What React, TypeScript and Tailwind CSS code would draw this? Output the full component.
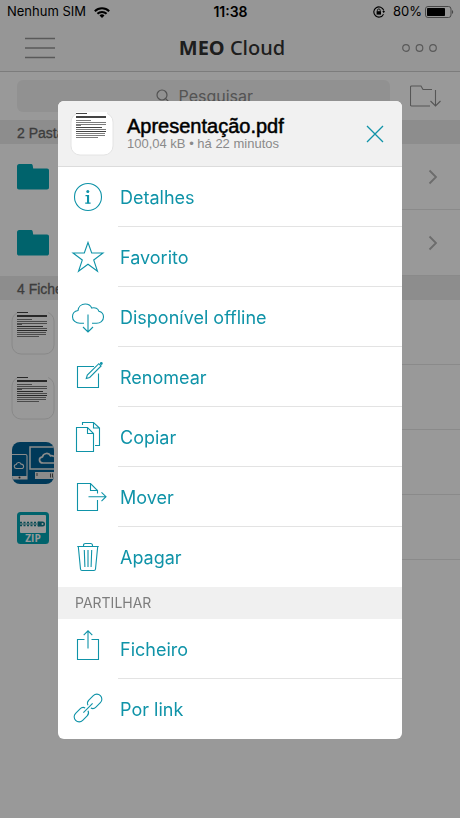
import React from 'react';

interface Action {
  label: string;
  icon: React.ReactNode;
}

const Icon = ({ children }: { children: React.ReactNode }) => (
  <svg
    className="h-8 w-8 overflow-visible"
    viewBox="0 0 32 32"
    fill="none"
    stroke="currentColor"
    strokeWidth={1.1}
    aria-hidden="true"
  >
    {children}
  </svg>
);

const actions: Action[] = [
  {
    label: 'Detalhes',
    icon: (
      <Icon>
        <circle cx="16" cy="16" r="13.5" />
        <circle cx="15.8" cy="10.6" r="1.5" fill="currentColor" stroke="none" />
        <path d="M13.5 14.6h3v7.6M13.2 22.2h5.4" strokeWidth={1.2} />
        <path d="M16 14.6v7.6" strokeWidth={2} />
      </Icon>
    ),
  },
  {
    label: 'Favorito',
    icon: (
      <Icon>
        <path d="M16 1.5 19.7 12H31L21.7 19 25.5 30.2 16 23.3 6.5 30.2 10.3 19 1 12h11.3z" />
      </Icon>
    ),
  },
  {
    label: 'Disponível offline',
    icon: (
      <Icon>
        <path d="M12 22.3H8C3.8 22.3 .5 19.5 .5 15.7 .5 12.5 2.8 10 6 9.500 6.4 5.7 9.3 3 13.2 3c3 0 5.5 1.5 6.5 4 3.5-1 6.500 .5 7.2 3.3 2.8 .7 4.6 3 4.6 5.700 0 4-3.3 6.3-7 6.3H20" />
        <path d="M16 13.5V31M11 26l5 5 5-5" />
      </Icon>
    ),
  },
  {
    label: 'Renomear',
    icon: (
      <Icon>
        <path d="M22 5.5H5.500v21h21V12.5" />
        <path d="M14.3 17.500l1-3.400L26.800 2.700l2.300 2.300L17.700 16.400z" />
        <circle cx="29.300" cy="2.500" r="1.400" fill="currentColor" stroke="none" />
      </Icon>
    ),
  },
  {
    label: 'Copiar',
    icon: (
      <Icon>
        <path d="M15.5 6.5h-11v24h17v-18zv6h6" />
        <path d="M10.5 4V1.500h11l6 5.500v17.500H23M21.500 1.500V7h6" />
      </Icon>
    ),
  },
  {
    label: 'Mover',
    icon: (
      <Icon>
        <path d="M25.5 12.500v-3l-7-7h-13v27h20V19M18.500 2.500v7h7" />
        <path d="M16.5 15.700H34M29.500 11.300l4.500 4.400-4.500 4.400" />
      </Icon>
    ),
  },
  {
    label: 'Apagar',
    icon: (
      <Icon>
        <path d="M5.3 5.500h21.400M11.500 5.500v-1c0-1.300.7-2 2-2h5c1.300 0 2 .7 2 2v1" />
        <path d="M6.3 5.500 8.500 28c.1.900.6 1.500 1.500 1.500h12c.9 0 1.400-.6 1.500-1.500L25.700 5.500" />
        <path d="M12.3 9l.6 17M16 9v17M19.700 9l-.6 17" />
      </Icon>
    ),
  },
];

const shareActions: Action[] = [
  {
    label: 'Ficheiro',
    icon: (
      <Icon>
        <path d="M12.5 6.500h-7v20h21v-20h-7" />
        <path d="M16 15.500V-2M11.700 2.200 16-2.100l4.300 4.300" />
      </Icon>
    ),
  },
  {
    label: 'Por link',
    icon: (
      <Icon>
        <g transform="translate(16 15) rotate(-45)">
          <path d="M-2 2C-2.600 4-4.200 5-6.200 5h-6.300a5 5 0 0 1 0-10h6.300c2 0 3.600 1 4.200 3" />
          <path d="M2-2C2.600-4 4.200-5 6.200-5h6.300a5 5 0 0 1 0 10H6.200C4.200 5 2.600 4 2 2" />
          <path d="M-6.500 0h13" />
        </g>
      </Icon>
    ),
  },
];

const DocumentThumb = () => (
  <svg className="h-[44px] w-[44px] overflow-visible" viewBox="0 0 44 44" aria-hidden="true">
    <rect x="1" y="1" width="42" height="42" rx="9" fill="#fff" stroke="#e4e4e4" strokeWidth="1" />
    <rect x="6" y="0" width="31" height="26" fill="#fff" />
    <g stroke="#444" fill="none">
      <path d="M6 1.500h11" strokeWidth="1" />
      <path d="M6 4.500h30M6 5.500h30M6 15.500h26M6 19.500h30" strokeWidth="1.100" />
      <path d="M6 8.500h15M6 10.500h30M6 12.500h30M6 13.500h5M6 17.500h30M6 21.500h29M6 23.500h29M6 25.500h22" strokeWidth=".7" />
    </g>
  </svg>
);

const FolderIcon = () => (
  <svg className="h-[26px] w-8" viewBox="0 0 32 26" fill="#00a5b5" aria-hidden="true">
    <path d="M0 2.500C0 1 .8 0 2.200 0H14c1 0 1.500.5 1.700 1.500L16.200 4.500H30c1.300 0 2 .8 2 2v17c0 1.300-.7 2-2 2H2c-1.300 0-2-.7-2-2z" />
  </svg>
);

const DevicesThumb = () => (
  <svg className="h-[42px] w-[42px]" viewBox="0 0 42 42" fill="none" stroke="#e8e8e8" aria-hidden="true">
    <clipPath id="devices">
      <rect width="42" height="42" rx="8" />
    </clipPath>
    <g clipPath="url(#devices)">
      <rect width="42" height="42" fill="#006094" stroke="none" />
      <path d="M0 12.500h13.500c1 0 1.500.5 1.500 1.500V37H0" strokeWidth="1.100" />
      <path d="M0 34h15v3H0z" fill="#e8e8e8" stroke="none" />
      <circle cx="7.500" cy="35.500" r="1" fill="#333" stroke="none" />
      <path d="M42 5H18v22h24" strokeWidth="1.500" />
      <path d="M4.500 26.500c-2.800 0-3-3.700-.3-4 .6-2.500 4-2.700 4.800-.4 3.200-.2 3.500 4.400.5 4.400z" strokeWidth="1.100" />
      <path d="M42 21H31c-4.500 0-4.700-5.700-.5-6.200 1-4 6.300-4.500 8-1 1.300-.3 2.500 0 3.500.8" strokeWidth="1.700" />
      <path d="M23 30h19v7H23z" fill="#e8e8e8" stroke="none" />
      <path d="M25 31v3M38.500 31.500v4M40.500 31.500v4" stroke="#555" />
    </g>
  </svg>
);

const ZipThumb = () => (
  <svg className="h-[32px] w-8" viewBox="0 0 32 32" aria-hidden="true">
    <rect width="32" height="32" rx="3.500" fill="#00a5b5" />
    <rect x="3" y="3" width="26" height="18" rx="1" fill="#fff" />
    <path d="M3 10.500h20M3 13.500h20" stroke="#0a7c8c" strokeWidth="1.500" strokeDasharray="2 1.500" />
    <path d="M3 12h21" stroke="#0a7c8c" strokeWidth=".8" />
    <path d="M21 9.500h4.500a2.500 2.500 0 0 1 0 5H21z" fill="#0a7c8c" />
    <circle cx="25.500" cy="12" r="1" fill="#fff" />
    <text x="16" y="30" textAnchor="middle" fontFamily="Open Sans, sans-serif" fontWeight="700" fontSize="10" fill="#fff">
      ZIP
    </text>
  </svg>
);

const StatusBar = () => (
  <div className="grid h-6 grid-cols-[1fr_auto_1fr] items-center pr-1.5 pl-[7px] text-[13px] text-black">
    <div className="flex items-center gap-2">
      <span>Nenhum SIM</span>
      <svg className="h-[11px] w-4" viewBox="0 0 16 11" fill="none" stroke="#000" strokeWidth="2" aria-hidden="true">
        <path d="M.8 4.200a10.200 10.200 0 0 1 14.400 0M3.400 6.800a6.500 6.500 0 0 1 9.200 0" />
        <path d="M8 11 5.500 8.600a3.500 3.500 0 0 1 5 0z" fill="#000" stroke="none" />
      </svg>
    </div>
    <span className="text-sm font-semibold">11:38</span>
    <div className="flex items-center justify-end">
      <svg className="mr-2 h-3 w-3" viewBox="0 0 12 12" fill="none" stroke="#000" aria-hidden="true">
        <path d="M10.800 4.500A5.100 5.100 0 1 0 10.500 8.200" strokeWidth="1.100" />
        <path d="M9.300 5h2.700l-1.200 2.200z" fill="#000" stroke="none" />
        <rect x="3.600" y="5.200" width="4.400" height="3.400" fill="#000" stroke="none" />
        <path d="M4.400 5.500V4.300a1.400 1.400 0 0 1 2.800 0v1.200" strokeWidth=".9" />
      </svg>
      <span className="mr-[3px]">80%</span>
      <svg className="h-3 w-[29px]" viewBox="0 0 29 12" aria-hidden="true">
        <rect x=".5" y=".5" width="25.500" height="11" rx="2.500" fill="none" stroke="#777" />
        <rect x="2" y="2" width="18" height="8" rx=".8" fill="#000" />
        <path d="M27 4c1.600.5 1.600 3.500 0 4z" fill="#777" />
      </svg>
    </div>
  </div>
);

const SectionTitle = ({ children }: { children: React.ReactNode }) => (
  <h2 className="h-6 bg-[#ebebeb] pt-px pl-[17px] font-['Liberation_Sans',sans-serif] text-sm leading-6 text-[#666] [-webkit-text-stroke:0.3px_#666]">
    {children}
  </h2>
);

const ListRow = ({ icon, chevron }: { icon: React.ReactNode; chevron?: boolean }) => (
  <li className={`flex items-stretch ${chevron ? 'h-[66px]' : 'h-[65px]'}`}>
    <div className="flex w-[66px] items-center justify-center">{icon}</div>
    <div className="flex flex-1 items-center justify-end border-b border-[#e6e6e6] pr-[22px]">
      {chevron && (
        <svg className="h-4 w-2.5" viewBox="0 0 10 16" fill="none" stroke="#b4b4b4" strokeWidth="1.800" aria-hidden="true">
          <path d="M1.500 1.500 8 8l-6.500 6.500" />
        </svg>
      )}
    </div>
  </li>
);

const ActionList = ({ items }: { items: Action[] }) => (
  <ul>
    {items.map((item) => (
      <li key={item.label} className="group">
        <button type="button" className="flex h-[60px] w-full items-stretch text-left text-[#0f93a8]">
          <span className="flex w-[60px] items-center justify-center">{item.icon}</span>
          <span className="flex flex-1 items-center border-b border-[#e3e3e3] pt-0.5 pl-0.5 text-lg group-last:border-transparent">
            {item.label}
          </span>
        </button>
      </li>
    ))}
  </ul>
);

const FileBrowser = () => (
  <main>
    <header className="bg-[#fbfbfb]">
      <StatusBar />
      <div className="grid h-12 grid-cols-[1fr_auto_1fr] items-center border-b border-[#cfcfcf] pr-5 pl-6">
        <button type="button" aria-label="Menu" className="w-8">
          <svg className="h-[22px] w-8" viewBox="0 0 32 22" stroke="#959595" strokeWidth="1.300" aria-hidden="true">
            <path d="M1 1.500h30M1 11h30M1 20.500h30" />
          </svg>
        </button>
        <h1 className="font-['Noto_Sans',sans-serif] text-xl font-medium text-[#333]">
          <b className="font-bold">MEO</b> Cloud
        </h1>
        <button type="button" aria-label="Mais" className="justify-self-end">
          <svg className="h-3 w-[38px]" viewBox="0 0 38 12" fill="none" stroke="#959595" strokeWidth="1.200" aria-hidden="true">
            <circle cx="4" cy="6" r="3.300" />
            <circle cx="17.500" cy="6" r="3.300" />
            <circle cx="31" cy="6" r="3.300" />
          </svg>
        </button>
      </div>
    </header>

    <div className="flex h-12 items-center pr-[18px] pl-[17px]">
      <label className="flex h-8 flex-1 items-center justify-center gap-2 rounded-md bg-[#f2f2f2]">
        <svg className="h-4 w-4" viewBox="0 0 16 16" fill="none" stroke="#888" strokeWidth="1.200" aria-hidden="true">
          <circle cx="7" cy="7" r="5" />
          <path d="M10.700 10.700 15 15" />
        </svg>
        <input
          type="text"
          aria-label="Pesquisar"
          placeholder="Pesquisar"
          className="w-[74px] bg-transparent text-base outline-none placeholder:text-[#8c8c8c]"
        />
      </label>
      <button type="button" aria-label="Ordenar" className="ml-5">
        <svg className="h-6 w-8" viewBox="0 0 32 24" fill="none" stroke="#909090" strokeWidth="1.100" aria-hidden="true">
          <path d="M20 22H1.500c-.7 0-1-.4-1-1V3c0-.7.400-1 1-1H11l2 3.500h9" />
          <path d="M25.500 6v16M20.500 17l5 5 5-5" />
        </svg>
      </button>
    </div>

    <SectionTitle>2 Pastas</SectionTitle>
    <ul>
      <ListRow icon={<FolderIcon />} chevron />
      <ListRow icon={<FolderIcon />} chevron />
    </ul>
    <SectionTitle>4 Ficheiros</SectionTitle>
    <ul>
      <ListRow icon={<DocumentThumb />} />
      <ListRow icon={<DocumentThumb />} />
      <ListRow icon={<DevicesThumb />} />
      <ListRow icon={<ZipThumb />} />
    </ul>
  </main>
);

const ActionSheet = () => (
  <div className="fixed inset-0 flex items-start bg-black/40 px-[58px] pt-[101px]">
    <section
      role="dialog"
      aria-labelledby="sheet-title"
      className="flex-1 overflow-hidden rounded-md bg-white"
    >
      <header className="flex h-[66px] items-center border-b border-[#dcdcdc] bg-[#f1f1f1] pr-[18px] pl-3">
        <DocumentThumb />
        <div className="ml-[13px] flex-1 font-['Liberation_Sans',sans-serif]">
          <h2 id="sheet-title" className="text-xl leading-5 text-black [-webkit-text-stroke:0.5px_#000]">
            Apresentação.pdf
          </h2>
          <p className="text-[13px] leading-4 text-[#8a8a8a]">100,04 kB • há 22 minutos</p>
        </div>
        <button type="button" aria-label="Fechar" className="text-[#0f93a8]">
          <svg className="h-[18px] w-[18px]" viewBox="0 0 18 18" fill="none" stroke="currentColor" strokeWidth="1.300" aria-hidden="true">
            <path d="M1 1l16 16M17 1 1 17" />
          </svg>
        </button>
      </header>
      <ActionList items={actions} />
      <h3 className="h-8 bg-[#f0f0f0] pl-[17px] text-sm leading-8 text-[#7d7d7d]">PARTILHAR</h3>
      <ActionList items={shareActions} />
    </section>
  </div>
);

const App = () => {
  return (
    <div className="min-h-screen bg-white font-['Inter',sans-serif]">
      <FileBrowser />
      <ActionSheet />
    </div>
  );
};

export default App;
